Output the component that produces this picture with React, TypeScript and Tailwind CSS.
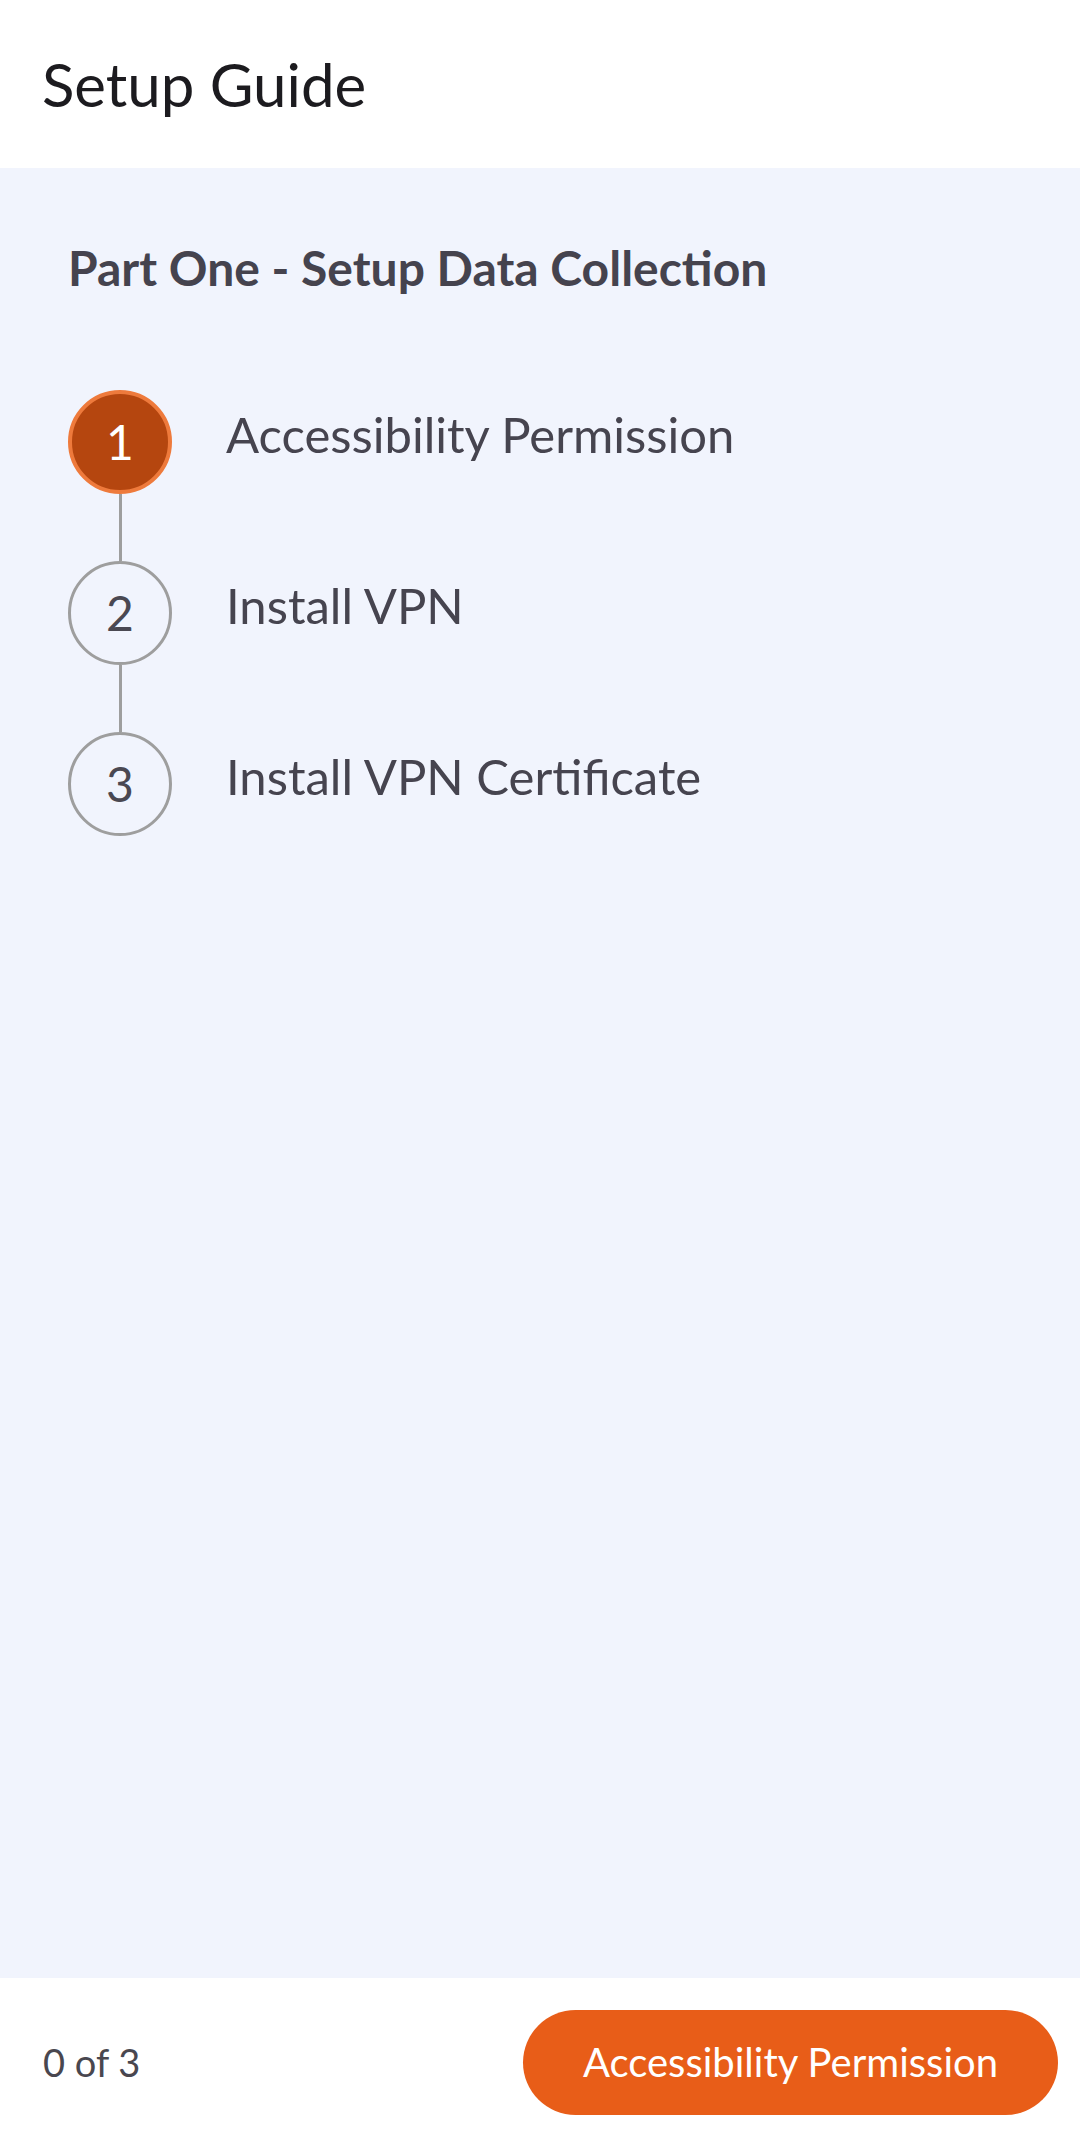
import React from 'react';

interface Step {
  id: number;
  label: string;
}

const steps: Step[] = [
  { id: 1, label: 'Accessibility Permission' },
  { id: 2, label: 'Install VPN' },
  { id: 3, label: 'Install VPN Certificate' },
];

function StepRow({ step, active, last }: { step: Step; active: boolean; last: boolean }) {
  return (
    <div className="flex">
      <div className="flex flex-col items-center w-[104px]">
        {active ? (
          <div className="size-[104px] rounded-full bg-[#b5460f] border-4 border-[#ee7a3c] flex items-center justify-center text-white text-[48px] leading-none">
            {step.id}
          </div>
        ) : (
          <div className="size-[104px] rounded-full border-[3px] border-[#9e9e9e] flex items-center justify-center text-[#4a4852] text-[48px] leading-none">
            {step.id}
          </div>
        )}
        {!last && <div className="w-[3px] h-[67px] bg-[#9e9e9e]" />}
      </div>
      <div className="ml-[54px] mt-[20px] text-[49px] leading-none text-[#46444f]">
        {step.label}
      </div>
    </div>
  );
}

export default function App() {
  const current = 0;

  return (
    <div className="h-screen flex flex-col bg-white font-['Lato',sans-serif]">
      <header className="h-[168px] shrink-0 flex items-center px-[42px]">
        <h1 className="text-[60px] leading-none text-[#1c1b1f]">Setup Guide</h1>
      </header>

      <main className="flex-1 bg-[#f1f4fd] pl-[68px] pt-[76px]">
        <h2 className="text-[48px] leading-none font-bold text-[#45434e]">
          Part One - Setup Data Collection
        </h2>
        <div className="mt-[98px] flex flex-col">
          {steps.map((step, i) => (
            <StepRow key={step.id} step={step} active={i === current} last={i === steps.length - 1} />
          ))}
        </div>
      </main>

      <footer className="h-[168px] shrink-0 flex items-center justify-between pl-[43px] pr-[22px]">
        <span className="text-[38px] leading-none text-[#49474f]">
          {current} of {steps.length}
        </span>
        <button className="w-[535px] h-[105px] rounded-full bg-[#e85d18] text-white text-[40px] leading-none flex items-center justify-center">
          Accessibility Permission
        </button>
      </footer>
    </div>
  );
}
